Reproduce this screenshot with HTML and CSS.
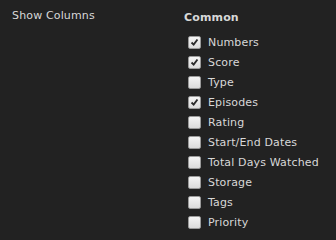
FILE: index.html
```html
<!DOCTYPE html>
<html lang="en">
<head>
    <meta charset="UTF-8">
    <title>Show Columns</title>
    <link rel="stylesheet" href="styles.css">
</head>
<body>
    <div class="settings">
        <div class="setting-name">Show Columns</div>
        <div class="setting-value">
            <h3>Common</h3>
            <ul class="column-list">
                <li><span class="box checked"><svg viewBox="0 0 13 13"><path d="M3 6.5 L5.5 9 L10 3"/></svg></span>Numbers</li>
                <li><span class="box checked"><svg viewBox="0 0 13 13"><path d="M3 6.5 L5.5 9 L10 3"/></svg></span>Score</li>
                <li><span class="box"></span>Type</li>
                <li><span class="box checked"><svg viewBox="0 0 13 13"><path d="M3 6.5 L5.5 9 L10 3"/></svg></span>Episodes</li>
                <li><span class="box"></span>Rating</li>
                <li><span class="box"></span>Start/End Dates</li>
                <li><span class="box"></span>Total Days Watched</li>
                <li><span class="box"></span>Storage</li>
                <li><span class="box"></span>Tags</li>
                <li><span class="box"></span>Priority</li>
            </ul>
        </div>
    </div>
</body>
</html>
```

FILE: styles.css
```css
* {
    margin: 0;
    padding: 0;
    box-sizing: border-box;
}

body {
    background: #222222;
    color: #d8d8d8;
    font-family: 'DejaVu Sans', Verdana, sans-serif;
    font-size: 11px;
    letter-spacing: 0.15px;
}

.settings {
    display: flex;
    padding-top: 9px;
}

.setting-name {
    width: 184px;
    padding-left: 12px;
}

.setting-value h3 {
    font-size: 11px;
    font-weight: bold;
    line-height: 16px;
    margin-top: 1px;
    margin-bottom: 6px;
}

.column-list {
    list-style: none;
    padding-left: 4px;
}

.column-list li {
    display: flex;
    align-items: center;
    height: 20px;
}

.box {
    width: 13px;
    height: 13px;
    margin-right: 7px;
    border: 1px solid #9a9a9a;
    border-radius: 2px;
    background: linear-gradient(#f4f4f4, #dcdcdc);
    display: flex;
}

.box svg {
    width: 11px;
    height: 11px;
}

.box svg path {
    fill: none;
    stroke: #2a2a2a;
    stroke-width: 2.2;
}
```
